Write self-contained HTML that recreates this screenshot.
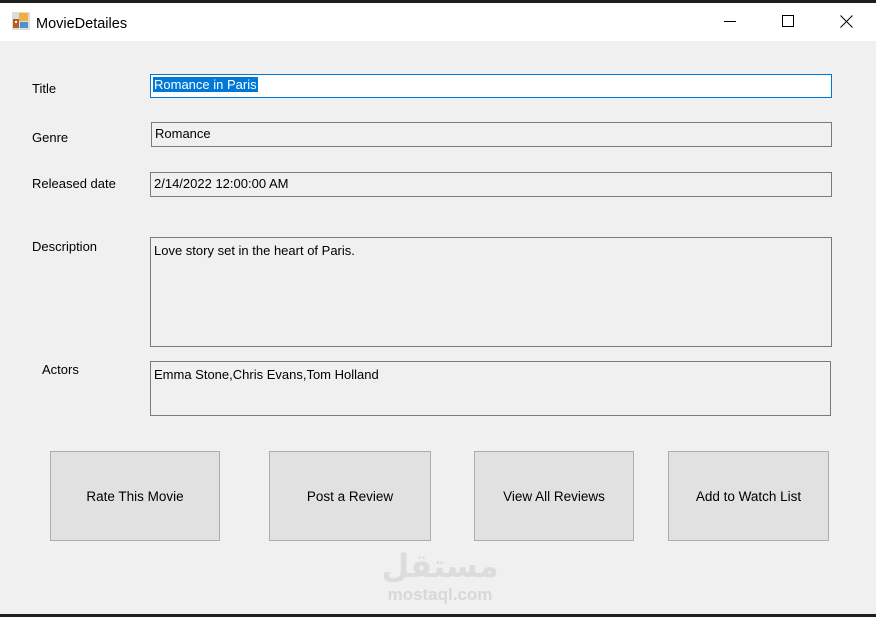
<!DOCTYPE html>
<html><head><meta charset="utf-8"><style>
*{margin:0;padding:0;box-sizing:border-box}
body{width:876px;height:617px;overflow:hidden;background:#f0f0f0;font-family:"Liberation Sans",sans-serif;font-size:13px;color:#000;position:relative}
.top{position:absolute;left:0;top:0;width:876px;height:3px;background:#1e1e1e}
.bar{position:absolute;left:0;top:3px;width:876px;height:38px;background:#fff}
.title{position:absolute;left:36px;top:13px;font-size:14.5px}
.lbl{position:absolute;font-size:13px}
.box{position:absolute;border:1px solid #7a7a7a;background:#f0f0f0;padding:3px 3px;font-size:13px}
.btn{position:absolute;border:1px solid #adadad;background:#e1e1e1;display:flex;align-items:center;justify-content:center;font-size:13.5px}
.bot{position:absolute;left:0;top:614px;width:876px;height:3px;background:#1e1e1e}
</style></head><body>
<div class="top"></div>
<div class="bar">
<svg style="position:absolute;left:12px;top:9px" width="18" height="18" viewBox="0 0 18 18">
<rect x="0" y="0" width="18" height="18" fill="#ddd"/>
<rect x="1" y="7" width="6" height="9" fill="#b06020"/><rect x="3" y="9" width="2" height="2" fill="#fff"/>
<rect x="7" y="1" width="9" height="8" fill="#f0b040"/><rect x="8" y="10" width="8" height="6" fill="#5090d0"/>
</svg>
<div class="title">MovieDetailes</div>
<div style="position:absolute;left:724px;top:18px;width:12px;height:1px;background:#000"></div>
<div style="position:absolute;left:782px;top:12px;width:12px;height:12px;border:1px solid #000"></div>
<svg style="position:absolute;left:840px;top:12px" width="13" height="13"><path d="M0.5 0.5L12.5 12.5M12.5 0.5L0.5 12.5" stroke="#000" stroke-width="1"/></svg>
</div>
<div class="lbl" style="left:32px;top:81px">Title</div>
<div class="box" style="left:150px;top:74px;width:682px;height:24px;border-color:#0078d7;background:#fff;padding:2px 2px"><span style="background:#0078d7;color:#fff;padding:0 1px">Romance in Paris</span></div>
<div class="lbl" style="left:32px;top:130px">Genre</div>
<div class="box" style="left:151px;top:122px;width:681px;height:25px">Romance</div>
<div class="lbl" style="left:32px;top:176px">Released date</div>
<div class="box" style="left:150px;top:172px;width:682px;height:25px">2/14/2022 12:00:00 AM</div>
<div class="lbl" style="left:32px;top:239px">Description</div>
<div class="box" style="left:150px;top:237px;width:682px;height:110px;padding:5px 3px">Love story set in the heart of Paris.</div>
<div class="lbl" style="left:42px;top:362px">Actors</div>
<div class="box" style="left:150px;top:361px;width:681px;height:55px;padding:5px 3px">Emma Stone,Chris Evans,Tom Holland</div>
<div class="btn" style="left:50px;top:451px;width:170px;height:90px">Rate This Movie</div>
<div class="btn" style="left:269px;top:451px;width:162px;height:90px">Post a Review</div>
<div class="btn" style="left:474px;top:451px;width:160px;height:90px">View All Reviews</div>
<div class="btn" style="left:668px;top:451px;width:161px;height:90px">Add to Watch List</div>
<div style="position:absolute;left:380px;top:549px;width:120px;text-align:center;color:#dcdcdc;font-family:'DejaVu Sans',sans-serif;font-size:32px;font-weight:bold;line-height:34px">مستقل</div>
<div style="position:absolute;left:380px;top:585px;width:120px;text-align:center;color:#d8d8d8;font-size:17px;font-weight:bold">mostaql.com</div>
<div class="bot"></div>
</body></html>
